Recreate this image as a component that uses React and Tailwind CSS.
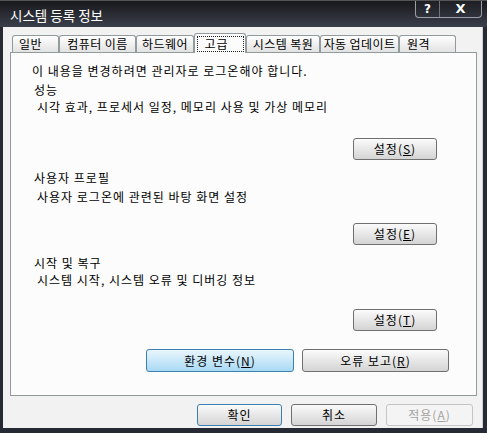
import React from "react"

const TABS = [
  { label: "일반", w: "w-[47px] justify-start pl-[6px]" },
  { label: "컴퓨터 이름", w: "w-[77px] justify-center" },
  { label: "하드웨어", w: "w-[58px] justify-center" },
  { label: "고급", w: "w-[52px]", active: true },
  { label: "시스템 복원", w: "w-[74px] justify-center" },
  { label: "자동 업데이트", w: "w-[79px] justify-center" },
  { label: "원격", w: "w-[57px] justify-start pl-[7px]" },
]

function Tab({ label, w, active }) {
  if (active) {
    return (
      <div
        className={`${w} h-[20px] -mb-px relative z-10 bg-[#fcfcfc] border border-b-0 border-[#919b9c] rounded-t-[3px] flex items-center justify-center`}
      >
        <span className="w-[47px] h-[16px] border border-dotted border-[#222] flex items-center justify-start pl-[7px] leading-none">
          {label}
        </span>
      </div>
    )
  }
  return (
    <div
      className={`${w} h-[17px] border border-b-0 border-[#919b9c] rounded-t-[3px] bg-gradient-to-b from-white to-[#e2e2e2] flex items-center leading-none whitespace-nowrap tracking-[0.4px]`}
    >
      {label}
    </div>
  )
}

function Button({ children, className = "", variant = "normal" }) {
  const look =
    variant === "hover"
      ? "border-[#3c7fb1] bg-gradient-to-b from-[#eaf6fd] to-[#a9d9f4] text-black"
      : variant === "default"
      ? "border-[#3c7fb1] bg-gradient-to-b from-[#fbfbfb] to-[#d4d4d4] text-black"
      : variant === "disabled"
      ? "border-[#c4c4c4] bg-[#f4f4f4] text-[#a3a3a3]"
      : "border-[#707070] bg-gradient-to-b from-[#fbfbfb] to-[#d4d4d4] text-black"
  return (
    <div
      className={`h-[22px] rounded-[3px] border flex items-center justify-center leading-none ${look} ${className}`}
    >
      {children}
    </div>
  )
}

function Line({ children, className = "" }) {
  return <div className={`h-[16px] leading-[16px] whitespace-nowrap ${className}`}>{children}</div>
}

export default function App() {
  return (
    <div className="w-[487px] h-[433px] bg-[#262a35] flex flex-col font-['Noto_Sans_CJK_KR','DejaVu_Sans',sans-serif] text-[12px] tracking-[1px] text-black overflow-hidden">
      {/* title bar */}
      <div className="h-[27px] shrink-0 flex items-start justify-between bg-gradient-to-b from-[#18191d] via-[#2a2c33] to-[#3a3f4c] border-t border-[#555]">
        <div className="pl-[10px] pt-[4px] text-white text-[13.5px] leading-[20px] tracking-normal">시스템 등록 정보</div>
        <div className="mr-[5px] flex h-[17px] border border-t-0 border-[#9a9ea8] rounded-b-[4px] bg-gradient-to-b from-[#1e1f24] to-[#30333c]">
          <div className="w-[24px] flex items-center justify-center text-white font-bold text-[12px] tracking-normal font-['DejaVu_Sans',sans-serif] border-r border-[#6f737c]">
            ?
          </div>
          <div className="w-[41px] flex items-center justify-center text-white font-bold text-[13px] tracking-normal font-['DejaVu_Sans',sans-serif]">
            X
          </div>
        </div>
      </div>

      {/* body */}
      <div className="flex-1 ml-[3px] mr-[4px] mb-[5px] bg-[#f2f2f2] border-r border-[#d0d0d0] pl-[7px] pr-[5px] pt-[6px] flex flex-col">
        <div className="h-[19px] flex items-end pl-[2px]">
          {TABS.map((t) => (
            <Tab key={t.label} {...t} />
          ))}
        </div>

        <div className="h-[344px] w-[467px] bg-[#fcfcfc] border border-[#919b9c] pl-[21px] pt-[10px] flex flex-col">
          <Line>이 내용을 변경하려면 관리자로 로그온해야 합니다.</Line>
          <Line className="mt-[3px] ml-[2px]">성능</Line>
          <Line className="mt-[1px] ml-[5px]">시각 효과, 프로세서 일정, 메모리 사용 및 가상 메모리</Line>
          <Button className="mt-[23px] self-end mr-[39px] w-[84px]">
            설정(<u>S</u>)
          </Button>

          <Line className="mt-[10px] ml-[2px]">사용자 프로필</Line>
          <Line className="mt-[3px] ml-[5px]">사용자 로그온에 관련된 바탕 화면 설정</Line>
          <Button className="mt-[18px] self-end mr-[39px] w-[84px]">
            설정(<u>E</u>)
          </Button>

          <Line className="mt-[10px] ml-[2px]">시작 및 복구</Line>
          <Line className="mt-[1px] ml-[5px]">시스템 시작, 시스템 오류 및 디버깅 정보</Line>
          <Button className="mt-[21px] self-end mr-[39px] w-[84px]">
            설정(<u>T</u>)
          </Button>

          <div className="mt-[18px] flex justify-end gap-[8px] mr-[27px]">
            <Button variant="hover" className="w-[148px] h-[23px]">
              환경 변수(<u>N</u>)
            </Button>
            <Button className="w-[147px] h-[23px]">
              오류 보고(<u>R</u>)
            </Button>
          </div>
        </div>

        <div className="mt-[8px] flex justify-end gap-[9px] mr-[4px]">
          <Button variant="default" className="w-[85px]">
            확인
          </Button>
          <Button className="w-[86px]">취소</Button>
          <Button variant="disabled" className="w-[87px]">
            적용(<u>A</u>)
          </Button>
        </div>
      </div>
    </div>
  )
}
